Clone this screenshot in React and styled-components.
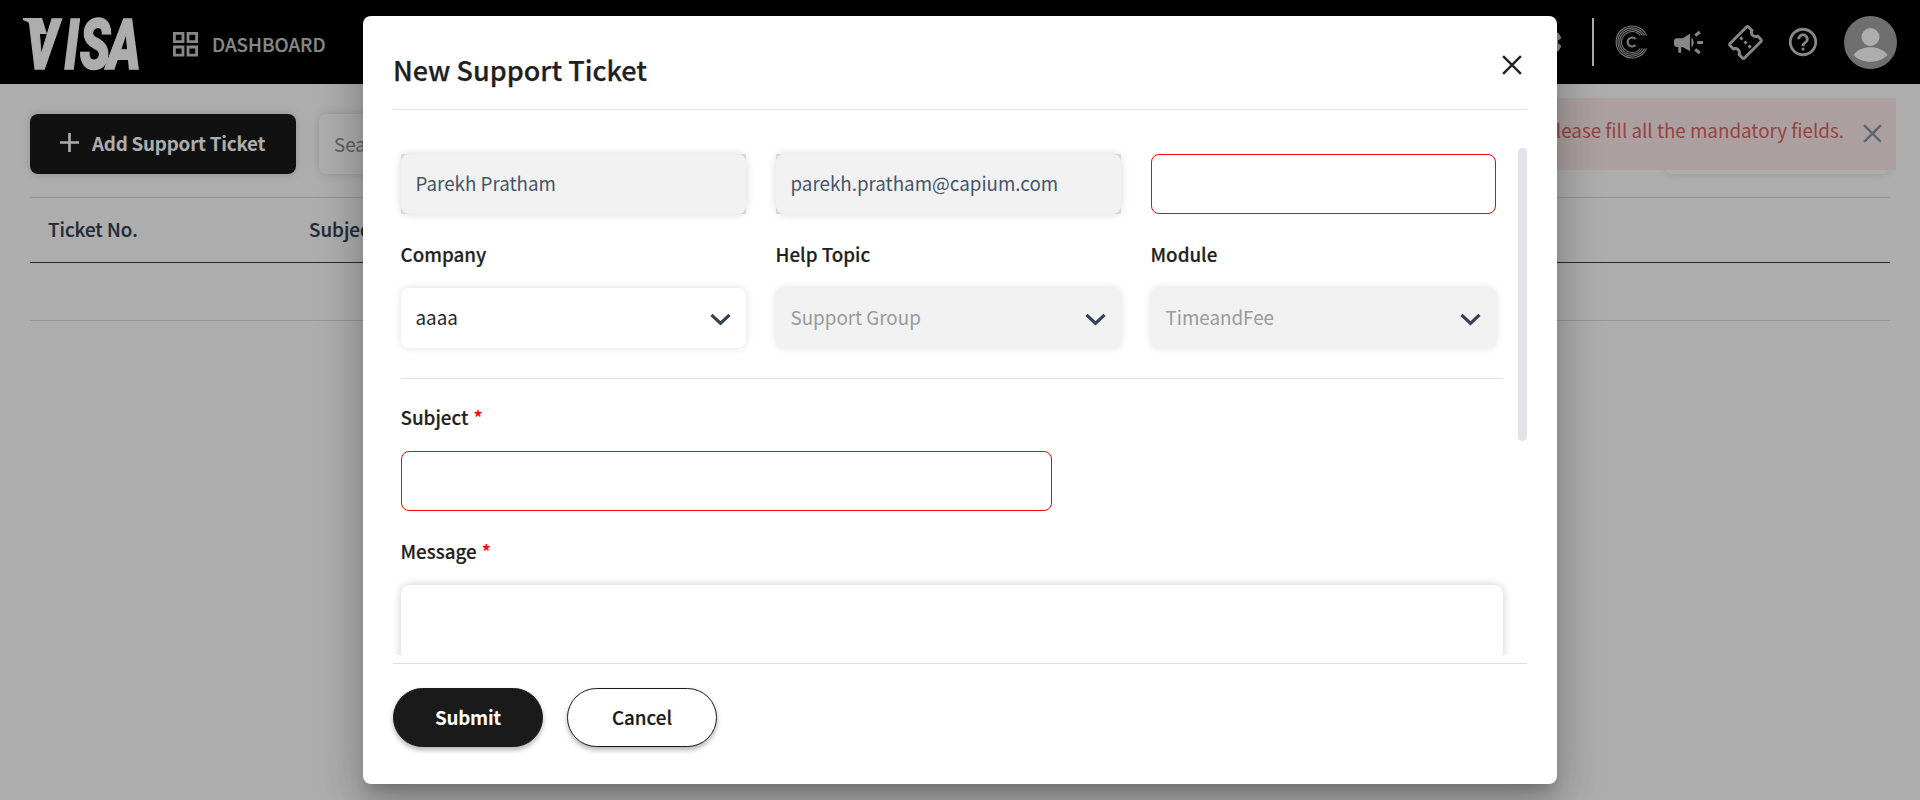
import React from "react";
import styled, { createGlobalStyle, css } from "styled-components";
import { MdCampaign, MdHelpOutline, MdOutlineConfirmationNumber, MdSettings } from "react-icons/md";

const Global = createGlobalStyle`
  * { box-sizing: border-box; }
  html, body { margin: 0; height: 100%; overflow: hidden; background: #fff; }
  body, button, input, textarea {
    font-family: "Noto Sans CJK SC", "Noto Sans", sans-serif;
    font-size: 18.8px;
  }
`;

const Page = styled.div`
  width: 1920px;
  height: 800px;
  position: relative;
  overflow: hidden;
`;

const Header = styled.header`
  height: 84px;
  background: #000;
  display: flex;
  align-items: center;
  justify-content: space-between;
  padding: 0 23px;
`;

const HeaderLeft = styled.div`
  display: flex;
  align-items: center;
`;

const Logo = styled.svg`
  width: 120px;
  height: 84px;
  display: block;
  overflow: visible;
`;

const NavItem = styled.div`
  display: flex;
  align-items: center;
  gap: 14px;
  margin-left: 30px;
  padding-top: 4px;
  color: #c8c8c8;
  font-weight: 500;
  line-height: 28px;
  -webkit-text-stroke: 0.2px currentColor;
`;

const HeaderRight = styled.div`
  display: flex;
  align-items: center;
  color: #c8c8c8;
  svg { display: block; }
`;

const Divider = styled.div`
  width: 2px;
  height: 48px;
  background: #fff;
  margin: 0 21px 0 27px;
`;

const HeaderIcon = styled.span`
  display: flex;
  margin-left: ${(p) => p.$left || 0}px;
  transform: rotate(${(p) => p.$turn || 0}deg);
`;

const Toolbar = styled.div`
  display: flex;
  align-items: center;
  padding: 30px 31px 0 30px;
`;

const AddButton = styled.button`
  display: flex;
  align-items: center;
  width: 266px;
  height: 60px;
  padding: 0 0 3px 29px;
  gap: 12px;
  border: 0;
  border-radius: 8px;
  background: #1a1a1a;
  color: #fff;
  font-weight: 700;
  letter-spacing: -0.22px;
  box-shadow: 0 0 10px rgba(0, 0, 0, 0.15);
  white-space: nowrap;
`;

const Search = styled.div`
  width: 420px;
  height: 60px;
  margin-left: 23px;
  padding: 0 15px;
  border-radius: 8px;
  box-shadow: 0 0 8px rgba(0, 0, 0, 0.16);
  color: #8c8c8c;
  line-height: 59px;
`;

const FilterBox = styled.div`
  width: 224px;
  height: 60px;
  margin-left: auto;
  border-radius: 8px;
  box-shadow: 0 0 8px rgba(0, 0, 0, 0.14);
`;

const Table = styled.div`
  margin: 23px 30px 0;
  border-top: 1px solid #dcdcdc;
`;

const TableHead = styled.div`
  display: grid;
  grid-template-columns: 261px 1fr;
  height: 65px;
  padding-left: 18px;
  line-height: 62px;
  border-bottom: 1px solid #334155;
  color: #334155;
  font-weight: 500;
  -webkit-text-stroke: 0.2px currentColor;
`;

const TableRow = styled.div`
  height: 58px;
  border-bottom: 1px solid #dcdcdc;
`;

const Toast = styled.div`
  position: absolute;
  top: 98px;
  right: 24px;
  height: 72px;
  width: 420px;
  display: flex;
  justify-content: flex-end;
  align-items: center;
  gap: 19px;
  padding: 0 14px 0 0;
  background: #fdecea;
  color: #dc6464;
  white-space: nowrap;
  span { line-height: 28px; margin-bottom: 8px; font-size: 18.8px; }
  svg { display: block; margin-bottom: 1px; }
`;

const Backdrop = styled.div`
  position: absolute;
  inset: 0;
  background: rgba(0, 0, 0, 0.32);
  display: flex;
  align-items: center;
  justify-content: center;
`;

const Dialog = styled.section`
  width: 1194px;
  height: 768px;
  border-radius: 8px;
  background: #fff;
  padding: 0 30px;
  color: #1f1f1f;
  box-shadow: 0 11px 15px -7px rgba(0, 0, 0, 0.2), 0 24px 38px 3px rgba(0, 0, 0, 0.14),
    0 9px 46px 8px rgba(0, 0, 0, 0.12);
`;

const DialogHeader = styled.div`
  height: 94px;
  display: flex;
  justify-content: space-between;
  border-bottom: 1px solid #e2e2e2;
  h2 {
    margin: 36px 0 0;
    font-size: 27px;
    line-height: 36px;
    font-weight: 500;
    -webkit-text-stroke: 0.25px currentColor;
  }
  svg { margin: 39px 5.5px 0 0; }
`;

const ScrollArea = styled.div`
  height: 507px;
  margin-top: 38px;
  display: flex;
  justify-content: space-between;
  overflow: hidden;
`;

const ScrollThumb = styled.div`
  width: 9px;
  height: 293px;
  border-radius: 5px;
  background: #e2e3e8;
`;

const Form = styled.div`
  width: 1110px;
  padding: 6px 0 0 8px;
`;

const FieldRow = styled.div`
  display: grid;
  grid-template-columns: repeat(3, 345px);
  column-gap: 30px;
`;

const Label = styled.div`
  height: 28px;
  line-height: 28px;
  font-weight: 500;
  -webkit-text-stroke: 0.2px currentColor;
  text-indent: -0.5px;
  margin-top: ${(p) => p.$top}px;
  sup {
    color: #f00;
    font-size: 18.8px;
    line-height: 0;
    vertical-align: baseline;
    margin-left: 5px;
  }
`;

const InputFrame = styled.div`
  height: 60px;
  width: ${(p) => p.$width || 345}px;
  margin-top: ${(p) => p.$top || 0}px;
  background: ${(p) => (p.$filled ? "#e3e3e3" : "transparent")};
`;

const Input = styled.div`
  height: 60px;
  padding: 0 14.5px;
  border-radius: 8px;
  line-height: 58px;
  color: #475569;
  background: #fff;
  ${(p) => p.$disabled && css`background: #f1f1f1; box-shadow: 0 0 10px rgba(0, 0, 0, 0.16);`}
  ${(p) => p.$error && css`border: 1px solid #f00;`}
`;

const Select = styled.div`
  height: 60px;
  margin-top: 20px;
  padding: 0 15px 0 14.5px;
  display: flex;
  align-items: center;
  justify-content: space-between;
  border-radius: 8px;
  color: #262626;
  line-height: 28px;
  box-shadow: 0 0 8px rgba(0, 0, 0, 0.13);
  span { margin-bottom: 3px; }
  svg { margin-top: 3px; }
  ${(p) => p.$disabled && css`
    color: #9a9a9a;
    background: #f1f1f1;
    box-shadow: 0 0 0 1px #f1f1f1, 0 0 8px rgba(0, 0, 0, 0.13);
  `}
`;

const Rule = styled.div`
  height: 1px;
  margin-top: 30px;
  background: #dcdde6;
`;

const MessageBox = styled.div`
  height: 200px;
  margin-top: 20px;
  border-radius: 8px;
  background: #fff;
  box-shadow: 0 0 10px rgba(0, 0, 0, 0.2);
`;

const Footer = styled.footer`
  margin-top: 8px;
  padding-top: 24px;
  display: flex;
  gap: 24px;
  border-top: 1px solid #dcdde2;
`;

const Pill = styled.button`
  width: 150px;
  height: 59px;
  padding: 0 0 2px;
  border-radius: 30px;
  border: 1px solid #1a1a1a;
  background: ${(p) => (p.$primary ? "#1a1a1a" : "#fff")};
  color: ${(p) => (p.$primary ? "#fff" : "#1a1a1a")};
  font-weight: ${(p) => (p.$primary ? 700 : 500)};
  letter-spacing: ${(p) => (p.$primary ? "-0.25px" : "0")};
  -webkit-text-stroke: ${(p) => (p.$primary ? "0" : "0.2px currentColor")};
  box-shadow: 0 3px 5px rgba(0, 0, 0, 0.3);
`;

const Cross = ({ size = 18, color = "#222", width = 2.2 }) => (
  <svg width={size} height={size} viewBox="0 0 18 18" stroke={color} strokeWidth={width}>
    <path d="M1 1l16 16M17 1L1 17" />
  </svg>
);

const Chevron = () => (
  <svg width="21" height="13" viewBox="0 0 21 13" fill="none" stroke="#334155" strokeWidth="3.2">
    <path d="M1.5 1.8l9 8.6 9-8.6" />
  </svg>
);

const GridIcon = () => (
  <svg width="25" height="25" viewBox="0 0 25 25" fill="none" stroke="currentColor" strokeWidth="2.8">
    <path d="M1.400 1.400h8.600v8.200h-8.600zM15 1.400h8.600v8.200h-8.600zM1.400 15h8.600v8.200h-8.600zM15 15h8.600v8.200h-8.600z" />
  </svg>
);

const CoinIcon = () => (
  <svg width="34" height="34" viewBox="0 0 34 34" fill="none" stroke="#b4b4b4">
    {[10.5, 12.3, 14.1, 15.9].map((r) => (
      <path
        key={r}
        strokeWidth="1.1"
        d={`M${17 + Math.sqrt(r * r - 42)} 10.5A${r} ${r} 0 1 0 ${17 + Math.sqrt(r * r - 42)} 23.5`}
      />
    ))}
    <path strokeWidth="2.2" d="M20.500 14A4.500 4.500 0 1 0 20.500 20" />
  </svg>
);

const Avatar = () => (
  <svg width="53" height="53" viewBox="0 0 53 53">
    <circle cx="26.5" cy="26.5" r="26.5" fill="#a4a4a4" />
    <circle cx="26.5" cy="21" r="9" fill="#fff" />
    <path d="M9.5 39C17 28.700 36 28.700 43.500 39C36 48 17 48 9.500 39z" fill="#fff" />
  </svg>
);

export default function App() {
  return (
    <>
      <Global />
      <Page>
        <Header>
          <HeaderLeft>
            <Logo viewBox="0 0 120 84" fill="#fff">
              <path d="M0 18h19l5 16h-8q-4-10-16-14z" />
              <text
                x="4 58 80 119"
                y="69.500"
                transform="scale(0.71 1)"
                fontFamily="Roboto"
                fontWeight="900"
                fontStyle="italic"
                fontSize="71"
                stroke="#fff"
                strokeWidth="1.600"
              >
                VISA
              </text>
            </Logo>
            <NavItem>
              <GridIcon />
              DASHBOARD
            </NavItem>
          </HeaderLeft>
          <HeaderRight>
            <HeaderIcon><MdSettings size={34} /></HeaderIcon>
            <Divider />
            <HeaderIcon><CoinIcon /></HeaderIcon>
            <HeaderIcon $left={22}><MdCampaign size={35} /></HeaderIcon>
            <HeaderIcon $left={22} $turn={-45}><MdOutlineConfirmationNumber size={35} /></HeaderIcon>
            <HeaderIcon $left={23}><MdHelpOutline size={34} /></HeaderIcon>
            <HeaderIcon $left={24}><Avatar /></HeaderIcon>
          </HeaderRight>
        </Header>
        <Toolbar>
          <AddButton>
            <svg width="21" height="21" viewBox="0 0 21 21" stroke="#fff" strokeWidth="2.6">
              <path d="M10.500 1v19M1 10.500h19" />
            </svg>
            Add Support Ticket
          </AddButton>
          <Search>Search</Search>
          <FilterBox />
        </Toolbar>
        <Table>
          <TableHead>
            <span>Ticket No.</span>
            <span>Subject</span>
          </TableHead>
          <TableRow />
        </Table>
        <Toast>
          <span>Please fill all the mandatory fields.</span>
          <Cross size={19} color="#8796ac" width={2.4} />
        </Toast>
        <Backdrop>
          <Dialog>
            <DialogHeader>
              <h2>New Support Ticket</h2>
              <Cross size={20} />
            </DialogHeader>
            <ScrollArea>
              <Form>
                <FieldRow>
                  <InputFrame $filled><Input $disabled>Parekh Pratham</Input></InputFrame>
                  <InputFrame $filled><Input $disabled>parekh.pratham@capium.com</Input></InputFrame>
                  <InputFrame><Input $error /></InputFrame>
                </FieldRow>
                <FieldRow>
                  <div>
                    <Label $top={26}>Company</Label>
                    <Select><span>aaaa</span><Chevron /></Select>
                  </div>
                  <div>
                    <Label $top={26}>Help Topic</Label>
                    <Select $disabled><span>Support Group</span><Chevron /></Select>
                  </div>
                  <div>
                    <Label $top={26}>Module</Label>
                    <Select $disabled><span>TimeandFee</span><Chevron /></Select>
                  </div>
                </FieldRow>
                <Rule />
                <Label $top={24}>Subject<sup>*</sup></Label>
                <InputFrame $width={651} $top={20}><Input $error /></InputFrame>
                <Label $top={26}>Message<sup>*</sup></Label>
                <MessageBox />
              </Form>
              <ScrollThumb />
            </ScrollArea>
            <Footer>
              <Pill $primary>Submit</Pill>
              <Pill>Cancel</Pill>
            </Footer>
          </Dialog>
        </Backdrop>
      </Page>
    </>
  );
}
